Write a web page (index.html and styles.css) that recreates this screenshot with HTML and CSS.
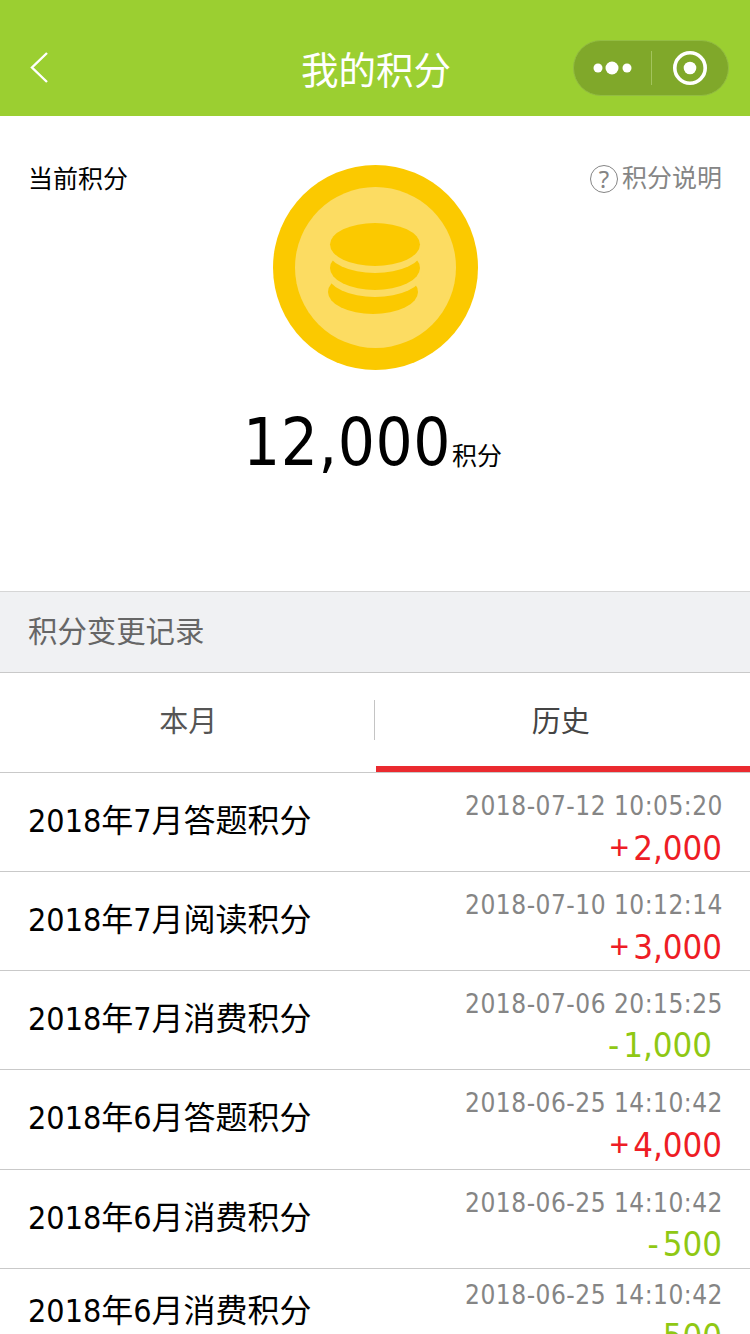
FILE: index.html
```html
<!DOCTYPE html>
<html lang="zh-CN">
<head>
<meta charset="utf-8">
<title>我的积分</title>
<link rel="stylesheet" href="styles.css">
</head>
<body>
<header class="nav">
  <svg class="nav-back" width="24" height="34" viewBox="0 0 24 34"><path d="M20 2 L5 16.500 L20 31" fill="none" stroke="#fff" stroke-width="2.400"/></svg>
  <h1 class="nav-title">我的积分</h1>
  <div class="capsule">
    <svg class="capsule-dots" width="40" height="16" viewBox="0 0 40 16"><circle cx="5" cy="8" r="4.500" fill="#fff"/><circle cx="19" cy="8" r="6.500" fill="#fff"/><circle cx="34" cy="8" r="4.500" fill="#fff"/></svg>
    <span class="capsule-sep"></span>
    <svg class="capsule-target" width="36" height="36" viewBox="0 0 36 36"><circle cx="18" cy="18" r="15.200" fill="none" stroke="#fff" stroke-width="3.600"/><circle cx="18" cy="18" r="6.300" fill="#fff"/></svg>
  </div>
</header>

<section class="summary">
  <div class="summary-top">
    <span class="summary-label">当前积分</span>
    <svg class="coin" width="205" height="205" viewBox="0 0 205 205">
      <circle cx="102.500" cy="102.500" r="102.500" fill="#fbc900"/>
      <circle cx="102.500" cy="102.500" r="80.500" fill="#fcdc62"/>
      <ellipse cx="100" cy="127" rx="45" ry="22" fill="#fbc900"/>
      <ellipse cx="102" cy="110" rx="47" ry="22" fill="#fcdc62"/>
      <ellipse cx="102" cy="103" rx="45" ry="22" fill="#fbc900"/>
      <ellipse cx="102" cy="86" rx="47" ry="22" fill="#fcdc62"/>
      <ellipse cx="102" cy="79.500" rx="45" ry="21.500" fill="#fbc900"/>
    </svg>
    <span class="summary-help"><span class="help-icon">?</span>积分说明</span>
  </div>
  <div class="summary-value"><span class="value-num">12,000</span><span class="value-unit">积分</span></div>
</section>

<div class="log-title">积分变更记录</div>

<nav class="tabs">
  <div class="tab">本月</div>
  <div class="tab tab-active">历史</div>
</nav>

<ul class="list">
  <li class="row"><span class="row-name">2018年7月答题积分</span><div class="row-side"><span class="row-time">2018-07-12 10:05:20</span><span class="row-amt plus"><span class="sign">+</span>2,000</span></div></li>
  <li class="row"><span class="row-name">2018年7月阅读积分</span><div class="row-side"><span class="row-time">2018-07-10 10:12:14</span><span class="row-amt plus"><span class="sign">+</span>3,000</span></div></li>
  <li class="row"><span class="row-name">2018年7月消费积分</span><div class="row-side"><span class="row-time">2018-07-06 20:15:25</span><span class="row-amt minus minus-wide"><span class="sign-minus">-</span>1,000</span></div></li>
  <li class="row"><span class="row-name">2018年6月答题积分</span><div class="row-side"><span class="row-time">2018-06-25 14:10:42</span><span class="row-amt plus"><span class="sign">+</span>4,000</span></div></li>
  <li class="row"><span class="row-name">2018年6月消费积分</span><div class="row-side"><span class="row-time">2018-06-25 14:10:42</span><span class="row-amt minus"><span class="sign-minus">-</span>500</span></div></li>
  <li class="row row-last"><span class="row-name">2018年6月消费积分</span><div class="row-side"><span class="row-time">2018-06-25 14:10:42</span><span class="row-amt minus"><span class="sign-minus">-</span>500</span></div></li>
</ul>
</body>
</html>
```
FILE: styles.css
```css
* { box-sizing: border-box; }
html, body { margin: 0; padding: 0; }
body {
  width: 750px;
  height: 1334px;
  overflow: hidden;
  background: #fff;
  font-family: "DejaVu Sans Condensed", "DejaVu Sans", "Noto Sans CJK SC", sans-serif;
  font-stretch: condensed;
  color: #000;
}
.nav {
  position: relative;
  height: 116px;
  background: #9bcf31;
  display: flex;
  align-items: center;
  justify-content: center;
  padding-top: 26px;
  padding-left: 2px;
}
.nav-back { position: absolute; left: 27px; top: 51px; }
.nav-title {
  margin: 0;
  font-size: 37.500px;
  font-weight: 400;
  color: #fff;
  line-height: 50px;
}
.capsule {
  position: absolute;
  left: 573px;
  top: 40px;
  width: 156px;
  height: 56px;
  border-radius: 28px;
  background: #80a82a;
  border: 1px solid #93bd42;
  display: flex;
  align-items: center;
  padding-left: 19px;
}
.capsule-dots { display: block; }
.capsule-sep { width: 1px; height: 34px; background: #a3c45c; margin-left: 18px; }
.capsule-target { display: block; margin-left: 20px; }

.summary { height: 475px; background: #fff; }
.summary-top { position: relative; height: 254px; padding-top: 49px; display: flex; justify-content: center; }
.summary-label { position: absolute; left: 28px; top: 47px; font-size: 25px; line-height: 34px; }
.coin { display: block; }
.summary-help {
  position: absolute;
  right: 28px;
  top: 46px;
  font-size: 25px;
  line-height: 34px;
  color: #858585;
  display: flex;
  align-items: center;
  gap: 4px;
}
.help-icon {
  display: flex;
  align-items: center;
  justify-content: center;
  width: 28px;
  height: 28px;
  border: 1px solid #858585;
  border-radius: 50%;
  font-family: "Noto Sans", sans-serif;
  font-size: 24px;
  line-height: 26px;
}
.summary-value { display: flex; justify-content: center; align-items: baseline; padding-right: 5px; line-height: 70px; margin-top: 38px; }
.value-num { font-size: 65px; letter-spacing: 0.600px; }
.value-unit { font-size: 25px; margin-left: 1px; }

.log-title {
  height: 82px;
  background: #f0f1f3;
  border-top: 1px solid #d6d6d6;
  border-bottom: 1px solid #c9c9c9;
  padding-left: 28px;
  font-size: 29.400px;
  line-height: 81px;
  color: #666;
}
.tabs { display: flex; height: 100px; position: relative; border-bottom: 1px solid #c9c9c9; }
.tab { flex: 1; text-align: center; font-size: 29px; line-height: 99px; color: #555; position: relative; }
.tab:first-child { padding-left: 2px; }
.tab:first-child::after { content: ""; position: absolute; right: 0; top: 27px; width: 1px; height: 40px; background: #c4c4c4; }
.tab-active { color: #444; padding-right: 3px; }
.tab-active::after { content: ""; position: absolute; left: 1px; right: 0; bottom: 0; height: 6px; background: #ea2a2f; }

.list { list-style: none; margin: 0; padding: 0; }
.row {
  height: 99px;
  border-bottom: 1px solid #c9c9c9;
  display: flex;
  justify-content: space-between;
  padding: 0 28px;
  position: relative;
}
.row:nth-child(4) { height: 100px; }
.row-name { font-size: 32px; line-height: 96px; color: #000; }
.row-side { display: flex; flex-direction: column; align-items: flex-end; padding-top: 16px; }
.row-time { font-size: 26px; line-height: 34px; color: #858585; letter-spacing: 0.500px; margin-right: -1px; }
.row-amt { font-size: 34.500px; line-height: 48px; margin-top: 0; }
.sign { font-family: "Noto Sans", sans-serif; letter-spacing: 4px; }
.sign-minus { letter-spacing: 4px; }
.plus { color: #ee1c25; }
.minus { color: #8fc814; }
.minus-wide { margin-right: 10px; }
.row-last .row-name { line-height: 84px; }
.row-last .row-side { padding-top: 9px; }
```
